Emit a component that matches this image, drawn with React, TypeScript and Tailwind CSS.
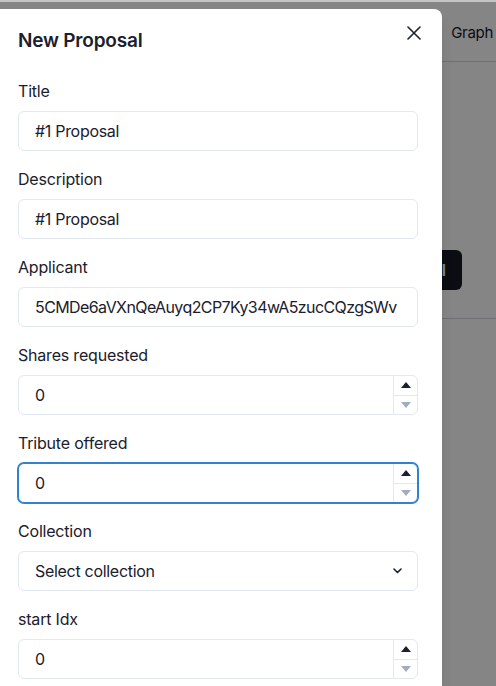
import React from 'react'

const FIELD_TEXT = 'text-[16px] tracking-[-0.3px] text-[#1a202c]'

function Label({ children }: { children: React.ReactNode }) {
  return <label className="block mb-2 text-[16px] leading-6 font-normal tracking-[-0.2px] text-[#1a202c]">{children}</label>
}

function TextInput({ value, tight }: { value: string; tight?: boolean }) {
  return (
    <input
      readOnly
      value={value}
      className={`block w-full h-10 px-4 rounded-md border border-[#e2e8f0] bg-white outline-none text-[16px] text-[#1a202c] ${
        tight ? 'tracking-[-0.6px]' : 'tracking-[-0.3px]'
      }`}
    />
  )
}

function Triangle({ up, color }: { up?: boolean; color: string }) {
  return (
    <svg width="10" height="6" viewBox="0 0 10 6">
      <path d={up ? 'M0 6 L5 0 L10 6 Z' : 'M0 0 L10 0 L5 6 Z'} fill={color} />
    </svg>
  )
}

function NumberInput({ value, focused }: { value: string; focused?: boolean }) {
  return (
    <div
      className={`relative flex h-10 w-full rounded-md bg-white border ${
        focused ? 'border-[#3182ce] shadow-[0_0_0_1px_#3182ce]' : 'border-[#e2e8f0]'
      }`}
    >
      <input readOnly value={value} className={`flex-1 min-w-0 px-4 bg-transparent outline-none ${FIELD_TEXT}`} />
      <div className="flex flex-col w-6 border-l border-[#e2e8f0]">
        <div className="flex-1 flex items-center justify-center">
          <Triangle up color="#1a202c" />
        </div>
        <div className="flex-1 flex items-center justify-center border-t border-[#e2e8f0]">
          <Triangle color="#a0aec0" />
        </div>
      </div>
    </div>
  )
}

function SelectInput({ value }: { value: string }) {
  return (
    <div className="relative flex items-center h-10 w-full px-4 rounded-md border border-[#e2e8f0] bg-white">
      <span className={`flex-1 ${FIELD_TEXT}`}>{value}</span>
      <svg width="9" height="6" viewBox="0 0 9 6" className="mr-[-1px]">
        <path d="M1 1 L4.5 4.5 L8 1" fill="none" stroke="#1a202c" strokeWidth="1.6" strokeLinecap="round" strokeLinejoin="round" />
      </svg>
    </div>
  )
}

export default function App() {
  return (
    <div className="relative w-[496px] h-[686px] overflow-hidden bg-white font-['Inter','Liberation_Sans',sans-serif]">
      {/* page behind the modal */}
      <header className="h-[62px] border-t-2 border-t-[#c4c4c4] border-b border-b-gray-300 flex items-center justify-end gap-8 pr-[3px] pt-[3px]">
        <span className="text-[15px] tracking-[-0.3px] text-gray-900">Proposals</span>
        <span className="text-[15px] tracking-[-0.3px] text-gray-900">Graph</span>
      </header>
      <section className="h-[257px] border-b border-gray-300 flex items-end justify-end pr-[34px] pb-[28px]">
        <button className="h-10 px-4 rounded-md bg-[#171923] text-white text-[16px] font-semibold">New Proposal</button>
      </section>

      {/* overlay */}
      <div className="absolute inset-x-0 bottom-0 top-[2px] bg-black/[0.48]" />

      {/* modal */}
      <div className="absolute left-0 top-[9px] bottom-0 w-[442px] bg-white rounded-tr-lg shadow-lg">
        <div className="pl-[18px] pt-[18px] pb-6">
          <h2 className="text-[19px] leading-7 font-semibold tracking-[-0.2px] text-[#1a202c]">New Proposal</h2>
        </div>
        <button className="absolute top-2 right-3 w-8 h-8 flex items-center justify-center rounded-md">
          <svg width="14" height="14" viewBox="0 0 14 14">
            <path d="M1 1 L13 13 M13 1 L1 13" stroke="#1a202c" strokeWidth="1.6" strokeLinecap="round" />
          </svg>
        </button>
        <div className="pl-[18px] pr-6 flex flex-col gap-4">
          <div>
            <Label>Title</Label>
            <TextInput value="#1 Proposal" />
          </div>
          <div>
            <Label>Description</Label>
            <TextInput value="#1 Proposal" />
          </div>
          <div>
            <Label>Applicant</Label>
            <TextInput value="5CMDe6aVXnQeAuyq2CP7Ky34wA5zucCQzgSWv" tight />
          </div>
          <div>
            <Label>Shares requested</Label>
            <NumberInput value="0" />
          </div>
          <div>
            <Label>Tribute offered</Label>
            <NumberInput value="0" focused />
          </div>
          <div>
            <Label>Collection</Label>
            <SelectInput value="Select collection" />
          </div>
          <div>
            <Label>start Idx</Label>
            <NumberInput value="0" />
          </div>
        </div>
      </div>
    </div>
  )
}
